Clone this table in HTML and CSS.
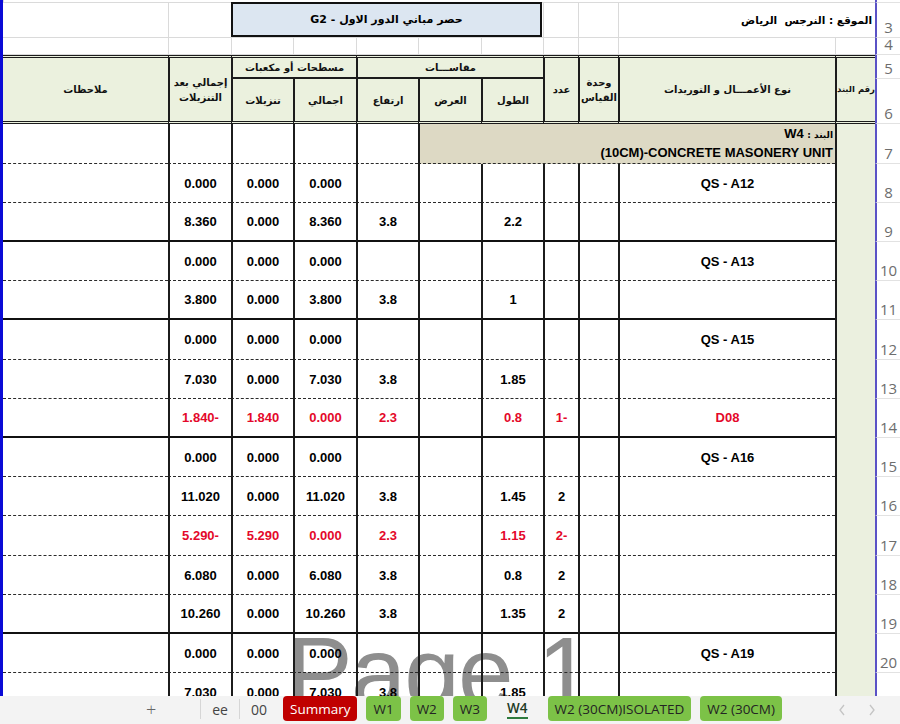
FILE: index.html
```html
<!DOCTYPE html>
<html lang="ar">
<head>
<meta charset="utf-8">
<title>W4</title>
<link rel="stylesheet" href="styles.css">
</head>
<body>
<div class="app">
  <div class="sheet">
    <div class="watermark">Page 1</div>
    <div class="grid" dir="rtl">
      <div class="bar"></div>
      <div class="bnd-col"></div>

      <!-- row 2 -->
      <div class="row">
        <div class="rh"></div>
        <div class="g top" style="grid-column: span 11"></div>
      </div>
      <!-- row 3 -->
      <div class="row">
        <div class="rh">3</div>
        <div class="g loc">الموقع : النرجس&nbsp; الرياض</div>
        <div class="g"></div>
        <div class="g"></div>
        <div class="title-cell"><div class="title">حصر مباني الدور الاول - G2</div></div>
        <div class="g"></div>
        <div class="g nb"></div>
      </div>
      <!-- row 4 -->
      <div class="row">
        <div class="rh">4</div>
        <div class="g"></div><div class="g"></div><div class="g"></div><div class="g"></div>
        <div class="g"></div><div class="g"></div><div class="g"></div><div class="g"></div>
        <div class="g"></div><div class="g"></div><div class="g nb"></div>
      </div>
      <!-- row 5 -->
      <div class="row">
        <div class="rh">5</div>
        <div class="h rs2 bt one">رقم البند</div>
        <div class="h rs2 bt">نوع الأعمـــال و التوريدات</div>
        <div class="h rs2 bt">وحدة<br>القياس</div>
        <div class="h rs2 bt">عدد</div>
        <div class="h cs3 bt mid">مقاســـات</div>
        <div class="h cs2 bt mid">مسطحات أو مكعبات</div>
        <div class="h rs2 bt">إجمالي بعد<br>التنزيلات</div>
        <div class="h rs2 bt nb">ملاحظات</div>
      </div>
      <!-- row 6 -->
      <div class="row">
        <div class="rh">6</div>
        <div class="h bb">الطول</div>
        <div class="h bb">العرض</div>
        <div class="h bb">ارتفاع</div>
        <div class="h bb">اجمالي</div>
        <div class="h bb">تنزيلات</div>
      </div>

      <!-- row 7 -->
      <div class="row dash">
        <div class="rh">7</div>
        <div class="c item" style="grid-column: span 5">
          <div class="item-l1"><span class="lbl">البند :</span> <b>W4</b></div>
          <div class="item-l2"><span dir="ltr">(10CM)-CONCRETE MASONERY UNIT</span></div>
        </div>
        <div class="c"></div><div class="c"></div><div class="c"></div><div class="c"></div><div class="c n"></div>
      </div>
      <!-- row 8 -->
      <div class="row dash">
        <div class="rh">8</div>
        <div class="c">QS - A12</div><div class="c"></div><div class="c"></div><div class="c"></div><div class="c"></div><div class="c"></div>
        <div class="c">0.000</div><div class="c">0.000</div><div class="c">0.000</div><div class="c n"></div>
      </div>
      <!-- row 9 -->
      <div class="row solid">
        <div class="rh">9</div>
        <div class="c"></div><div class="c"></div><div class="c"></div><div class="c">2.2</div><div class="c"></div><div class="c">3.8</div>
        <div class="c">8.360</div><div class="c">0.000</div><div class="c">8.360</div><div class="c n"></div>
      </div>
      <!-- row 10 -->
      <div class="row dash">
        <div class="rh">10</div>
        <div class="c">QS - A13</div><div class="c"></div><div class="c"></div><div class="c"></div><div class="c"></div><div class="c"></div>
        <div class="c">0.000</div><div class="c">0.000</div><div class="c">0.000</div><div class="c n"></div>
      </div>
      <!-- row 11 -->
      <div class="row solid">
        <div class="rh">11</div>
        <div class="c"></div><div class="c"></div><div class="c"></div><div class="c">1</div><div class="c"></div><div class="c">3.8</div>
        <div class="c">3.800</div><div class="c">0.000</div><div class="c">3.800</div><div class="c n"></div>
      </div>
      <!-- row 12 -->
      <div class="row dash">
        <div class="rh">12</div>
        <div class="c">QS - A15</div><div class="c"></div><div class="c"></div><div class="c"></div><div class="c"></div><div class="c"></div>
        <div class="c">0.000</div><div class="c">0.000</div><div class="c">0.000</div><div class="c n"></div>
      </div>
      <!-- row 13 -->
      <div class="row dash">
        <div class="rh">13</div>
        <div class="c"></div><div class="c"></div><div class="c"></div><div class="c">1.85</div><div class="c"></div><div class="c">3.8</div>
        <div class="c">7.030</div><div class="c">0.000</div><div class="c">7.030</div><div class="c n"></div>
      </div>
      <!-- row 14 -->
      <div class="row solid red">
        <div class="rh">14</div>
        <div class="c">D08</div><div class="c"></div><div class="c">1-</div><div class="c">0.8</div><div class="c"></div><div class="c">2.3</div>
        <div class="c">0.000</div><div class="c">1.840</div><div class="c">1.840-</div><div class="c n"></div>
      </div>
      <!-- row 15 -->
      <div class="row dash">
        <div class="rh">15</div>
        <div class="c">QS - A16</div><div class="c"></div><div class="c"></div><div class="c"></div><div class="c"></div><div class="c"></div>
        <div class="c">0.000</div><div class="c">0.000</div><div class="c">0.000</div><div class="c n"></div>
      </div>
      <!-- row 16 -->
      <div class="row dash">
        <div class="rh">16</div>
        <div class="c"></div><div class="c"></div><div class="c">2</div><div class="c">1.45</div><div class="c"></div><div class="c">3.8</div>
        <div class="c">11.020</div><div class="c">0.000</div><div class="c">11.020</div><div class="c n"></div>
      </div>
      <!-- row 17 -->
      <div class="row dash red">
        <div class="rh">17</div>
        <div class="c"></div><div class="c"></div><div class="c">2-</div><div class="c">1.15</div><div class="c"></div><div class="c">2.3</div>
        <div class="c">0.000</div><div class="c">5.290</div><div class="c">5.290-</div><div class="c n"></div>
      </div>
      <!-- row 18 -->
      <div class="row dash">
        <div class="rh">18</div>
        <div class="c"></div><div class="c"></div><div class="c">2</div><div class="c">0.8</div><div class="c"></div><div class="c">3.8</div>
        <div class="c">6.080</div><div class="c">0.000</div><div class="c">6.080</div><div class="c n"></div>
      </div>
      <!-- row 19 -->
      <div class="row solid">
        <div class="rh">19</div>
        <div class="c"></div><div class="c"></div><div class="c">2</div><div class="c">1.35</div><div class="c"></div><div class="c">3.8</div>
        <div class="c">10.260</div><div class="c">0.000</div><div class="c">10.260</div><div class="c n"></div>
      </div>
      <!-- row 20 -->
      <div class="row dash">
        <div class="rh">20</div>
        <div class="c">QS - A19</div><div class="c"></div><div class="c"></div><div class="c"></div><div class="c"></div><div class="c"></div>
        <div class="c">0.000</div><div class="c">0.000</div><div class="c">0.000</div><div class="c n"></div>
      </div>
      <!-- row 21 -->
      <div class="row">
        <div class="rh"></div>
        <div class="c"></div><div class="c"></div><div class="c"></div><div class="c">1.85</div><div class="c"></div><div class="c">3.8</div>
        <div class="c">7.030</div><div class="c">0.000</div><div class="c">7.030</div><div class="c n"></div>
      </div>
    </div>
  </div>

  <div class="tabs">
    <div class="plus">+</div>
    <div class="stab sep">ee</div>
    <div class="stab sep">00</div>
    <div class="tab summary">Summary</div>
    <div class="tab green">W1</div>
    <div class="tab green">W2</div>
    <div class="tab green">W3</div>
    <div class="tab active"><span>W4</span></div>
    <div class="tab green">W2 (30CM)ISOLATED</div>
    <div class="tab green">W2 (30CM)</div>
    <div class="nav">
      <svg width="8" height="12" viewBox="0 0 8 12"><path d="M6 1 L2 6 L6 11" fill="none" stroke="#c4c4c4" stroke-width="1.3"/></svg>
      <svg width="8" height="12" viewBox="0 0 8 12"><path d="M2 1 L6 6 L2 11" fill="none" stroke="#c4c4c4" stroke-width="1.3"/></svg>
    </div>
  </div>
</div>
</body>
</html>
```

FILE: styles.css
```css
* { box-sizing: border-box; margin: 0; padding: 0; }
html, body { width: 900px; height: 724px; overflow: hidden; background: #fff; }
body { font-family: "Liberation Sans", Arial, "DejaVu Sans", sans-serif; color: #000; }

.app { display: flex; flex-direction: column; height: 724px; }
.sheet { position: relative; height: 696px; flex: none; overflow: hidden; background: #fff; }

.watermark {
  position: absolute; left: 286px; top: 622px;
  font-family: "Liberation Sans", Arial, sans-serif;
  font-size: 100px; line-height: 1; letter-spacing: -2px;
  color: #8e8e8e; white-space: nowrap; z-index: 0;
}

.grid {
  position: relative; z-index: 1;
  display: grid; direction: rtl;
  grid-template-columns: 25px 40px 217px 40px 35px 62px 63px 62px 63px 62px 63px 165px 3px;
  grid-template-rows: 3px 35px 17px 24px 45px 40px repeat(4, 39px) 40px repeat(4, 39px) 40px repeat(3, 39px) 39px;
}
.row { display: contents; }

.bar { grid-column: 13; grid-row: 1 / 21; background: #0a0ad6; }
.bnd-col { grid-column: 2; grid-row: 6 / 21; background: #ebf0df; border-left: 2px solid #1c1c1c; }

/* row header */
.rh {
  border-left: 2px solid #5a52c6;
  border-bottom: 1px solid #e2e2e2;
  display: flex; align-items: flex-end; justify-content: center;
  font-family: "Open Sans", "Noto Sans", sans-serif; font-size: 15px; color: #6d6d6d;
  line-height: 18px; padding-bottom: 1px;
}

/* light gridlines */
.g { border-left: 1px solid #dadada; border-bottom: 1px solid #dadada; }
.g.nb { border-left: none; }
.loc {
  grid-column: span 2; white-space: nowrap; direction: rtl;
  font-family: "DejaVu Sans", sans-serif; font-weight: bold; font-size: 10.5px;
  padding: 11px 3px 0 0; text-align: right;
}
.title-cell { grid-column: span 5; border-bottom: 1px solid #dadada; padding-right: 1px; margin-top: -1px; }
.title {
  height: 35px; border: 2px solid #111; background: #dce6f1;
  display: flex; align-items: center; justify-content: center;
  font-family: "DejaVu Sans", sans-serif; font-weight: bold; font-size: 11px; direction: rtl;
}

/* header */
.h {
  background: #ebf1de; border-left: 2px solid #1c1c1c;
  display: flex; align-items: center; justify-content: center; text-align: center;
  font-family: "DejaVu Sans", sans-serif; font-size: 10px; font-weight: bold; line-height: 15px;
  direction: rtl; color: #111;
}
.h.one { white-space: nowrap; font-size: 8.5px; letter-spacing: -0.2px; }
.h.nb { border-left: none; }
.h.rs2 { grid-row: span 2; border-bottom: 3px double #1c1c1c; }
.h.cs3 { grid-column: span 3; }
.h.cs2 { grid-column: span 2; }
.h.bt { border-top: 3px double #1c1c1c; }
.h.mid { border-bottom: 2px solid #1c1c1c; }
.h.bb { border-bottom: 3px double #1c1c1c; }

/* data cells */
.c {
  border-left: 2px solid #1c1c1c;
  display: flex; align-items: center; justify-content: center;
  font-weight: bold; font-size: 13px; direction: ltr; white-space: nowrap;
}
.c.n { border-left: none; }
.dash > .c { border-bottom: 1px dashed #2a2a2a; }
.solid > .c { border-bottom: 2px solid #111; }
.red > .c { color: #e4082a; }

.item {
  background: #ddd9c4; direction: rtl;
  flex-direction: column; align-items: flex-end; justify-content: center;
  padding: 0 2px 1px 0;
}
.item-l1, .item-l2 { width: 100%; text-align: right; line-height: 17px; }
.item-l1 b { font-size: 13px; }
.lbl { font-family: "DejaVu Sans", sans-serif; font-size: 9px; font-weight: bold; }
.item-l2 { font-size: 13px; }

/* tabs */
.tabs {
  flex: 1; background: #f3f3f3; display: flex; align-items: flex-start;
  font-family: "Open Sans", "Noto Sans", sans-serif; font-size: 13px; color: #333;
}
.plus { width: 200px; padding-left: 140px; font-size: 18px; line-height: 26px; color: #666; font-weight: 300; text-indent: 6px; }
.stab {
  width: 39px; display: flex; align-items: center; justify-content: center;
  font-size: 14px; color: #444;
}
.stab.sep { border-left: 1px solid #d6d6d6; margin-top: 3px; height: 20px; }
.stab.sep:last-of-type { border-right: 1px solid #d6d6d6; }

.tab {
  height: 25px; padding: 0 7px; border-radius: 4px; margin-left: 9px;
  display: flex; align-items: center; font-size: 13.5px; color: #242424; white-space: nowrap;
}
.summary { background: #c00000; color: #fff; margin-left: 5px; }
.green { background: #7cc247; }
.active { padding: 0 11px; }
.active span { display: block; font-weight: 600; color: #1d3a23; border-bottom: 2px solid #2d7a3e; line-height: 17px; margin-top: 1px; }
.nav { margin-left: auto; margin-right: 24px; display: flex; gap: 22px; padding-top: 8px; }
```
